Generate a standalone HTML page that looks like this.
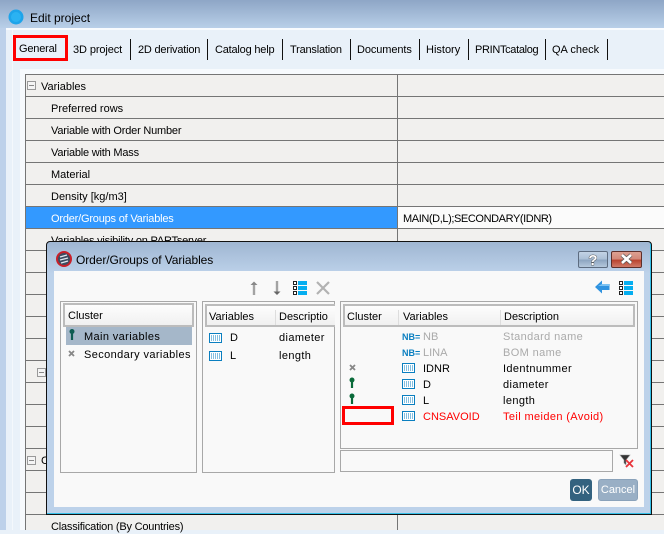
<!DOCTYPE html>
<html><head><meta charset="utf-8"><style>
html,body{margin:0;padding:0}
body{width:664px;height:530px;overflow:hidden;position:relative;background:#e9f1f9;font-family:"Liberation Sans",sans-serif;font-size:11px;color:#000}
div,span,svg{position:absolute;white-space:nowrap}
.t{line-height:14px;height:14px}
.w{letter-spacing:.38px}
.n{letter-spacing:-.2px}
.l{left:25px;width:639px;height:1px;background:#757575}
.tb{top:39px;width:1px;height:21px;background:#111}
.g{color:#aaa}.r{color:#f00}
.h{background:linear-gradient(#fdfdfd,#f0f0f0);border:2px solid #bcbcbc;box-sizing:border-box}
.p{border:1px solid #a8a8a8;box-sizing:border-box;background:#f9f9f9}
</style></head><body>
<div style="left:0;top:0;width:664px;height:28px;background:linear-gradient(#8ea6c6,#b8cfe8)"></div>
<div style="left:0;top:28px;width:6px;height:502px;background:#bdd1ea"></div>
<div style="left:12px;top:28px;width:1px;height:502px;background:#f4f8fc"></div>
<div style="left:6px;top:28px;width:658px;height:2px;background:#f8fbfe"></div>
<svg style="left:8px;top:9px" width="16" height="16"><circle cx="8" cy="8" r="7.5" fill="#1ea4ea"/><circle cx="8" cy="8" r="5" fill="#2bb2f2"/></svg>
<div class="t" style="left:30px;top:11px;font-size:12px">Edit project</div>

<div style="left:13px;top:35px;width:55px;height:26px;border:3px solid #f00;box-sizing:border-box"></div>
<div class="t n" style="left:19px;top:42px">General</div>
<div class="t" style="left:73px;top:43px;letter-spacing:-.1px">3D project</div>
<div class="tb" style="left:130px"></div>
<div class="t n" style="left:138px;top:43px">2D derivation</div>
<div class="tb" style="left:207px"></div>
<div class="t n" style="left:215px;top:43px">Catalog help</div>
<div class="tb" style="left:282px"></div>
<div class="t n" style="left:290px;top:43px">Translation</div>
<div class="tb" style="left:350px"></div>
<div class="t" style="left:357px;top:43px;letter-spacing:-.1px">Documents</div>
<div class="tb" style="left:419px"></div>
<div class="t" style="left:426px;top:43px">History</div>
<div class="tb" style="left:468px"></div>
<div class="t" style="left:475px;top:43px;letter-spacing:-.33px">PRINTcatalog</div>
<div class="tb" style="left:545px"></div>
<div class="t" style="left:552px;top:43px">QA check</div>
<div class="tb" style="left:607px"></div>

<div style="left:20px;top:69px;width:644px;height:461px;background:#f7fafd"></div>
<div style="left:25px;top:74px;width:639px;height:456px;background:#f1f0ee"></div>
<div style="left:25px;top:74px;width:1px;height:456px;background:#757575"></div>
<div style="left:397px;top:74px;width:1px;height:456px;background:#757575"></div>
<div class="l" style="top:74px"></div><div class="l" style="top:96px"></div><div class="l" style="top:118px"></div><div class="l" style="top:140px"></div><div class="l" style="top:162px"></div><div class="l" style="top:184px"></div><div class="l" style="top:206px"></div><div class="l" style="top:228px"></div><div class="l" style="top:250px"></div><div class="l" style="top:272px"></div><div class="l" style="top:294px"></div><div class="l" style="top:316px"></div><div class="l" style="top:338px"></div><div class="l" style="top:360px"></div><div class="l" style="top:382px"></div><div class="l" style="top:404px"></div><div class="l" style="top:426px"></div><div class="l" style="top:448px"></div><div class="l" style="top:470px"></div><div class="l" style="top:492px"></div><div class="l" style="top:514px"></div>

<svg style="left:27px;top:81px" width="10" height="10"><rect x=".5" y=".5" width="8" height="8" fill="#f4f4f4" stroke="#999"/><path d="M2 4.500h5" stroke="#888"/></svg>
<div class="t" style="left:41px;top:80px">Variables</div>
<div class="t" style="left:51px;top:102px">Preferred rows</div>
<div class="t n" style="left:51px;top:124px">Variable with Order Number</div>
<div class="t n" style="left:51px;top:146px">Variable with Mass</div>
<div class="t" style="left:51px;top:168px">Material</div>
<div class="t" style="left:51px;top:190px">Density [kg/m3]</div>
<div style="left:26px;top:207px;width:371px;height:21px;background:#3399ff"></div>
<div class="t n" style="left:51px;top:212px;color:#fff">Order/Groups of Variables</div>
<div style="left:398px;top:207px;width:266px;height:21px;background:#fbfbfb"></div>
<div class="t" style="left:403px;top:212px;letter-spacing:-.4px">MAIN(D,L);SECONDARY(IDNR)</div>
<div class="t n" style="left:51px;top:234px">Variables visibility on PARTserver</div>
<svg style="left:37px;top:368px" width="10" height="10"><rect x=".5" y=".5" width="8" height="8" fill="#f4f4f4" stroke="#999"/><path d="M2 4.500h5" stroke="#888"/></svg>
<svg style="left:27px;top:456px" width="10" height="10"><rect x=".5" y=".5" width="8" height="8" fill="#f4f4f4" stroke="#999"/><path d="M2 4.500h5" stroke="#888"/></svg>
<div class="t" style="left:41px;top:454px">C</div>
<div class="t n" style="left:51px;top:520px">Classification (By Countries)</div>

<div style="left:46px;top:241px;width:606px;height:274px;background:linear-gradient(#9fb6d2 0,#bdd2ea 32px);border:1px solid #111;box-sizing:border-box;border-radius:4px 4px 0 0;box-shadow:inset -1px -1px 0 #35c0e8"></div>
<svg style="left:56px;top:251px" width="16" height="16"><circle cx="8" cy="8" r="7" fill="#3c4c60" stroke="#c8202a" stroke-width="2"/><path d="M4 6l7-2M4 9l8-2M5 12l7-2" stroke="#dfe6ee" stroke-width="1.400"/></svg>
<div class="t" style="left:76px;top:253px;font-size:12px;letter-spacing:-.08px">Order/Groups of Variables</div>
<div style="left:578px;top:251px;width:30px;height:17px;box-sizing:border-box;border:1px solid #5d6c80;border-radius:2px;background:linear-gradient(#c3d3e5 0,#a9bed5 50%,#8ba3bf 52%,#b5c8dc 100%)"></div>
<svg style="left:586px;top:252px" width="14" height="15"><text x="7" y="13" text-anchor="middle" font-family="Liberation Sans" font-weight="bold" font-size="15" fill="#fff" stroke="#444" stroke-width=".8" paint-order="stroke">?</text></svg>
<div style="left:611px;top:251px;width:31px;height:17px;box-sizing:border-box;border:1px solid #5e2f2a;border-radius:2px;background:linear-gradient(#dda092 0,#d28676 50%,#b8402c 52%,#d07a68 100%)"></div>
<svg style="left:619px;top:253px" width="15" height="12"><path d="M3 2l9 8M12 2l-9 8" stroke="#555" stroke-width="4"/><path d="M3 2l9 8M12 2l-9 8" stroke="#fff" stroke-width="2.600"/></svg>

<div style="left:54px;top:271px;width:590px;height:236px;background:#f9f9f9"></div>

<svg style="left:248px;top:280px" width="12" height="16"><path d="M6 15V3" stroke="#a3a3a3" stroke-width="2.400"/><path d="M2.500 5L6 1.500 9.500 5z" fill="#888"/></svg>
<svg style="left:271px;top:280px" width="12" height="16"><path d="M6 1v11" stroke="#a3a3a3" stroke-width="2.400"/><path d="M2.500 11.500L6 15l3.500-3.500z" fill="#666"/></svg>
<svg style="left:293px;top:281px" width="14" height="14"><path d="M.5.500h3v3h-3zM.5 5.500h3v3h-3zM.5 10.500h3v3h-3z" fill="#fff" stroke="#222"/><path d="M5 0h9v4H5zM5 5h9v4H5zM5 10h9v4H5z" fill="#05aef0"/></svg>
<svg style="left:316px;top:281px" width="14" height="14"><path d="M1 1l12 12M13 1L1 13" stroke="#b2b2b2" stroke-width="2.200"/></svg>
<svg style="left:595px;top:280px" width="15" height="14"><path d="M0 7L7 .5v3.500h7.500v6H7v3.500z" fill="#2f93e0"/><path d="M7 4h7v2H3z" fill="#7cc2f2"/></svg>
<svg style="left:619px;top:281px" width="14" height="14"><path d="M.5.500h3v3h-3zM.5 5.500h3v3h-3zM.5 10.500h3v3h-3z" fill="#fff" stroke="#222"/><path d="M5 0h9v4H5zM5 5h9v4H5zM5 10h9v4H5z" fill="#05aef0"/></svg>

<div class="p" style="left:60px;top:301px;width:137px;height:172px"></div>
<div class="p" style="left:202px;top:301px;width:133px;height:172px"></div>
<div class="p" style="left:340px;top:301px;width:298px;height:148px"></div>
<div class="p" style="left:340px;top:450px;width:273px;height:22px"></div>

<div class="h" style="left:63px;top:303px;width:131px;height:24px"></div>
<div class="h" style="left:205px;top:304px;width:130px;height:23px;border-right:0"></div>
<div class="h" style="left:343px;top:304px;width:292px;height:23px"></div>
<div style="left:275px;top:310px;width:1px;height:15px;background:#ddd"></div>
<div style="left:398px;top:310px;width:1px;height:15px;background:#ddd"></div>
<div style="left:500px;top:310px;width:1px;height:15px;background:#ddd"></div>

<div class="t" style="left:68px;top:309px">Cluster</div>
<div class="t" style="left:209px;top:310px">Variables</div>
<div class="t" style="left:279px;top:310px">Descriptio</div>
<div class="t" style="left:347px;top:310px">Cluster</div>
<div class="t" style="left:403px;top:310px">Variables</div>
<div class="t" style="left:504px;top:310px">Description</div>

<div style="left:66px;top:327px;width:126px;height:18px;background:#a5b7c9"></div>
<svg style="left:68px;top:329px" width="8" height="14"><path d="M4 2.500v0" stroke="#0d5c52" stroke-width="5" stroke-linecap="round"/><path d="M4 3v8" stroke="#0d5c52" stroke-width="2.200"/></svg>
<div class="t w" style="left:84px;top:330px">Main variables</div>
<svg style="left:68px;top:350px" width="8" height="8"><path d="M1 1l5 5M6 1L1 6" stroke="#888" stroke-width="1.800"/></svg>
<div class="t w" style="left:84px;top:348px">Secondary variables</div>

<svg style="left:209px;top:333px" width="13" height="11"><rect x=".5" y=".5" width="12" height="9" fill="#fff" stroke="#0a7fc0"/><path d="M2 3h9M2 5h9M2 7h9" stroke="#0a7fc0" stroke-dasharray="1 1"/></svg>
<div class="t" style="left:230px;top:331px">D</div>
<div class="t w" style="left:279px;top:331px">diameter</div>
<svg style="left:209px;top:351px" width="13" height="11"><rect x=".5" y=".5" width="12" height="9" fill="#fff" stroke="#0a7fc0"/><path d="M2 3h9M2 5h9M2 7h9" stroke="#0a7fc0" stroke-dasharray="1 1"/></svg>
<div class="t" style="left:230px;top:349px">L</div>
<div class="t w" style="left:279px;top:349px">length</div>

<div class="t" style="left:402px;top:330px;color:#0a7fc0;font-size:9px;font-weight:bold">NB=</div>
<div class="t g" style="left:423px;top:330px">NB</div>
<div class="t g w" style="left:503px;top:330px">Standard name</div>
<div class="t" style="left:402px;top:346px;color:#0a7fc0;font-size:9px;font-weight:bold">NB=</div>
<div class="t g" style="left:423px;top:346px">LINA</div>
<div class="t g w" style="left:503px;top:346px">BOM name</div>

<svg style="left:349px;top:364px" width="8" height="8"><path d="M1 1l5 5M6 1L1 6" stroke="#888" stroke-width="1.800"/></svg>
<svg style="left:402px;top:363px" width="13" height="11"><rect x=".5" y=".5" width="12" height="9" fill="#fff" stroke="#0a7fc0"/><path d="M2 3h9M2 5h9M2 7h9" stroke="#0a7fc0" stroke-dasharray="1 1"/></svg>
<div class="t" style="left:423px;top:362px">IDNR</div>
<div class="t w" style="left:503px;top:362px">Identnummer</div>

<svg style="left:348px;top:377px" width="8" height="13"><path d="M4 3v0" stroke="#0a6a3a" stroke-width="5" stroke-linecap="round"/><path d="M4 3v8" stroke="#0a6a3a" stroke-width="2.200"/></svg>
<svg style="left:402px;top:379px" width="13" height="11"><rect x=".5" y=".5" width="12" height="9" fill="#fff" stroke="#0a7fc0"/><path d="M2 3h9M2 5h9M2 7h9" stroke="#0a7fc0" stroke-dasharray="1 1"/></svg>
<div class="t" style="left:423px;top:378px">D</div>
<div class="t w" style="left:503px;top:378px">diameter</div>

<svg style="left:348px;top:393px" width="8" height="13"><path d="M4 3v0" stroke="#0a6a3a" stroke-width="5" stroke-linecap="round"/><path d="M4 3v8" stroke="#0a6a3a" stroke-width="2.200"/></svg>
<svg style="left:402px;top:395px" width="13" height="11"><rect x=".5" y=".5" width="12" height="9" fill="#fff" stroke="#0a7fc0"/><path d="M2 3h9M2 5h9M2 7h9" stroke="#0a7fc0" stroke-dasharray="1 1"/></svg>
<div class="t" style="left:423px;top:394px">L</div>
<div class="t w" style="left:503px;top:394px">length</div>

<div style="left:342px;top:406px;width:52px;height:19px;border:3px solid #f00;box-sizing:border-box"></div>
<svg style="left:402px;top:411px" width="13" height="11"><rect x=".5" y=".5" width="12" height="9" fill="#fff" stroke="#0a7fc0"/><path d="M2 3h9M2 5h9M2 7h9" stroke="#0a7fc0" stroke-dasharray="1 1"/></svg>
<div class="t r" style="left:423px;top:410px">CNSAVOID</div>
<div class="t r w" style="left:503px;top:410px">Teil meiden (Avoid)</div>

<svg style="left:619px;top:454px" width="16" height="15"><path d="M1 1h10L7 6v5L5 9V6z" fill="#333" stroke="#999" stroke-width=".6"/><path d="M7 6l7 7M14 6l-7 7" stroke="#e8333a" stroke-width="1.800"/></svg>

<div style="left:570px;top:479px;width:22px;height:22px;background:#33627f;border-radius:3px;color:#fff;text-align:center;line-height:22px;font-size:12px">OK</div>
<div style="left:598px;top:479px;width:40px;height:22px;background:#99afc5;border:1px solid #8aa2ba;box-sizing:border-box;border-radius:3px;color:#fff;text-align:center;line-height:20px;font-size:11px">Cancel</div>
</body></html>
